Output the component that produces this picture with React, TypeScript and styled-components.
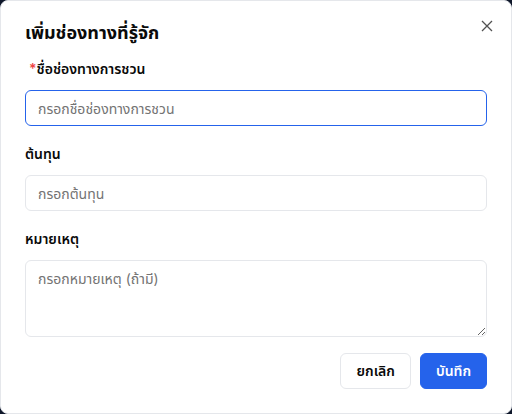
import React from 'react';
import styled, { createGlobalStyle } from 'styled-components';

const GlobalStyle = createGlobalStyle`
    html, body {
        margin: 0;
        padding: 0;
        background: #0f172a;
    }
    body {
        font-family: Inter, "Noto Sans Thai", "Noto Sans", sans-serif;
    }
    * {
        box-sizing: border-box;
    }
`;

const Dialog = styled.div`
    width: 512px;
    height: 414px;
    background: #ffffff;
    border: 1px solid #e5e7eb;
    border-radius: 8px;
    padding: 18px 24px 24px;
    display: flex;
    flex-direction: column;
    position: relative;
`;

const Title = styled.h2`
    margin: 0;
    font-size: 18px;
    font-weight: 700;
    line-height: 28px;
    color: #0a0a0a;
`;

const CloseButton = styled.button`
    position: absolute;
    top: 17px;
    right: 16px;
    width: 16px;
    height: 16px;
    padding: 0;
    border: none;
    background: transparent;
    color: #525252;
    display: flex;
    align-items: center;
    justify-content: center;
    cursor: pointer;
`;

const Form = styled.div`
    display: flex;
    flex-direction: column;
    gap: 18px;
    margin-top: 12px;
`;

const Field = styled.div`
    display: flex;
    flex-direction: column;
    gap: 11px;
`;

const Label = styled.label`
    font-size: 14px;
    font-weight: 600;
    line-height: 20px;
    color: #0a0a0a;
`;

const Required = styled.span`
    color: #ef4444;
    margin-left: 4px;
`;

const Input = styled.input<{ $focused?: boolean }>`
    height: 36px;
    width: 100%;
    padding: 0 12px;
    font-family: inherit;
    font-size: 14px;
    color: #0a0a0a;
    border-radius: 6px;
    border: 1px solid ${({ $focused }) => ($focused ? '#2563eb' : '#e5e7eb')};
    outline: none;
    background: #fff;

    &::placeholder {
        color: #737373;
    }
`;

const TextArea = styled.textarea`
    height: 77px;
    width: 100%;
    padding: 8px 12px;
    font-family: inherit;
    font-size: 14px;
    line-height: 20px;
    border-radius: 6px;
    border: 1px solid #e5e7eb;
    outline: none;
    resize: vertical;
    background: #fff;

    &::placeholder {
        color: #737373;
    }
`;

const Footer = styled.div`
    display: flex;
    justify-content: flex-end;
    gap: 9px;
    margin-top: 16px;
`;

const Button = styled.button<{ $primary?: boolean }>`
    height: 36px;
    padding: 0 15px;
    font-family: inherit;
    font-size: 14px;
    font-weight: 600;
    border-radius: 6px;
    cursor: pointer;
    border: 1px solid ${({ $primary }) => ($primary ? '#2563eb' : '#e5e7eb')};
    background: ${({ $primary }) => ($primary ? '#2563eb' : '#ffffff')};
    color: ${({ $primary }) => ($primary ? '#ffffff' : '#0a0a0a')};
`;

export default function App() {
    return (
        <>
            <GlobalStyle />
            <Dialog>
                <Title>เพิ่มช่องทางที่รู้จัก</Title>
                <CloseButton aria-label="ปิด">
                    <svg width="12" height="12" viewBox="0 0 12 12" fill="none">
                        <path d="M1 1L11 11M11 1L1 11" stroke="currentColor" strokeWidth="1.3" />
                    </svg>
                </CloseButton>
                <Form>
                    <Field>
                        <Label>
                            <Required>*</Required>ชื่อช่องทางการชวน
                        </Label>
                        <Input $focused placeholder="กรอกชื่อช่องทางการชวน" />
                    </Field>
                    <Field>
                        <Label>ต้นทุน</Label>
                        <Input placeholder="กรอกต้นทุน" />
                    </Field>
                    <Field>
                        <Label>หมายเหตุ</Label>
                        <TextArea placeholder="กรอกหมายเหตุ (ถ้ามี)" />
                    </Field>
                </Form>
                <Footer>
                    <Button>ยกเลิก</Button>
                    <Button $primary>บันทึก</Button>
                </Footer>
            </Dialog>
        </>
    );
}
